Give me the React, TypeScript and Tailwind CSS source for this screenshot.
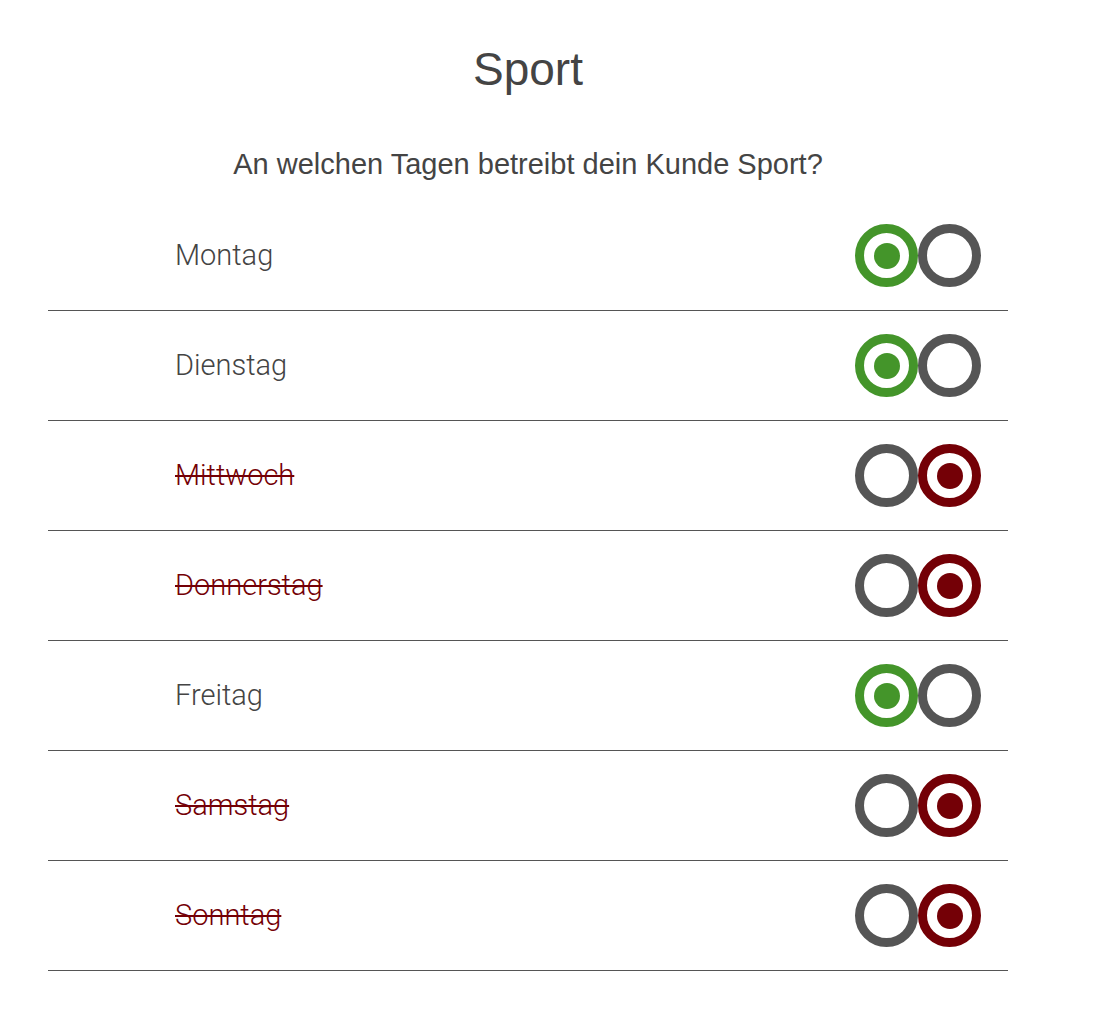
import React, { useState } from "react";

type Val = "yes" | "no";

const DAYS: { name: string; v: Val }[] = [
  { name: "Montag", v: "yes" },
  { name: "Dienstag", v: "yes" },
  { name: "Mittwoch", v: "no" },
  { name: "Donnerstag", v: "no" },
  { name: "Freitag", v: "yes" },
  { name: "Samstag", v: "no" },
  { name: "Sonntag", v: "no" },
];

function Radio({ on, color, onClick }: { on: boolean; color: "green" | "red"; onClick: () => void }) {
  const ring = on ? (color === "green" ? "border-[#44952a]" : "border-[#740006]") : "border-[#555555]";
  const dot = color === "green" ? "bg-[#44952a]" : "bg-[#740006]";
  return (
    <button
      type="button"
      onClick={onClick}
      className={`w-[63px] h-[63px] rounded-full border-[9px] ${ring} bg-white flex items-center justify-center p-0`}
    >
      {on && <span className={`block w-[26px] h-[26px] rounded-full ${dot}`} />}
    </button>
  );
}

export default function App() {
  const [days, setDays] = useState(DAYS);
  const set = (i: number, v: Val) => setDays((d) => d.map((x, j) => (j === i ? { ...x, v } : x)));
  return (
    <div className="w-[960px] ml-[48px] bg-white text-[#444444] font-['Liberation_Sans',Arial,sans-serif]">
      <h1 className="pt-[46px] text-center text-[46px] leading-[46px] font-normal">Sport</h1>
      <p className="mt-[58px] text-center text-[29px] leading-[29px]">An welchen Tagen betreibt dein Kunde Sport?</p>
      <div className="mt-[22px]">
        {days.map((d, i) => (
          <div
            key={d.name}
            className="h-[110px] border-b border-[#555555] flex items-center justify-between pl-[127px] pr-[27px]"
          >
            <span
              className={`text-[29px] font-light font-['Roboto',sans-serif] ${
                d.v === "no" ? "text-[#740006] line-through decoration-[2px]" : "text-[#444444]"
              }`}
            >
              {d.name}
            </span>
            <div className="flex">
              <Radio on={d.v === "yes"} color="green" onClick={() => set(i, "yes")} />
              <Radio on={d.v === "no"} color="red" onClick={() => set(i, "no")} />
            </div>
          </div>
        ))}
      </div>
    </div>
  );
}
